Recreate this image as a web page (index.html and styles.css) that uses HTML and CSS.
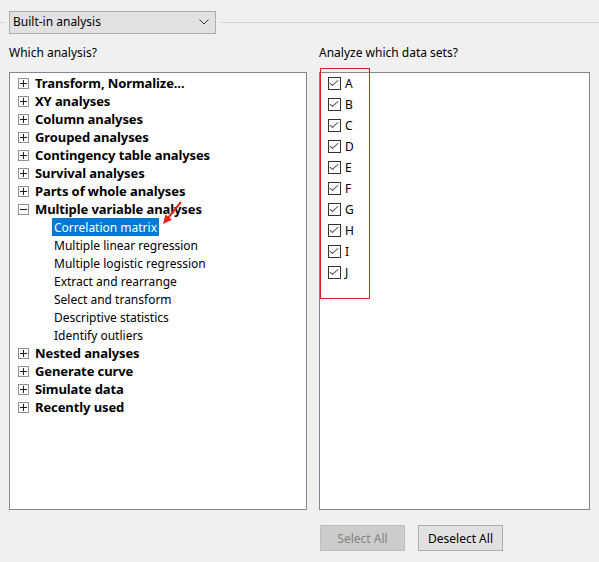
FILE: index.html
```html
<!DOCTYPE html>
<html>
<head>
<meta charset="utf-8">
<link rel="stylesheet" href="styles.css">
</head>
<body>
<div class="header">
  <span class="rule short"></span>
  <div class="dropdown">
    <span>Built-in analysis</span>
    <svg class="chev" width="10" height="6" viewBox="0 0 10 6"><path d="M0.5 0.5 L5 5 L9.5 0.5" fill="none" stroke="#333" stroke-width="1"/></svg>
  </div>
  <span class="rule long"></span>
</div>
<div class="columns">
  <div class="col left">
    <div class="label">Which analysis?</div>
    <div class="box tree">
      <div class="node"><span class="pm plus"></span><b>Transform, Normalize...</b></div>
      <div class="node"><span class="pm plus"></span><b>XY analyses</b></div>
      <div class="node"><span class="pm plus"></span><b>Column analyses</b></div>
      <div class="node"><span class="pm plus"></span><b>Grouped analyses</b></div>
      <div class="node"><span class="pm plus"></span><b>Contingency table analyses</b></div>
      <div class="node"><span class="pm plus"></span><b>Survival analyses</b></div>
      <div class="node"><span class="pm plus"></span><b>Parts of whole analyses</b></div>
      <div class="node"><span class="pm minus"></span><b>Multiple variable analyses</b></div>
      <div class="leaf"><span class="sel">Correlation matrix</span></div>
      <div class="leaf"><span>Multiple linear regression</span></div>
      <div class="leaf"><span>Multiple logistic regression</span></div>
      <div class="leaf"><span>Extract and rearrange</span></div>
      <div class="leaf"><span>Select and transform</span></div>
      <div class="leaf"><span>Descriptive statistics</span></div>
      <div class="leaf"><span>Identify outliers</span></div>
      <div class="node"><span class="pm plus"></span><b>Nested analyses</b></div>
      <div class="node"><span class="pm plus"></span><b>Generate curve</b></div>
      <div class="node"><span class="pm plus"></span><b>Simulate data</b></div>
      <div class="node"><span class="pm plus"></span><b>Recently used</b></div>
      <svg class="arrow" width="24" height="26" viewBox="0 0 24 26">
        <line x1="20" y1="2" x2="7" y2="18" stroke="#e8231b" stroke-width="2"/>
        <polygon points="2,24 4.4,14.4 11,19.8" fill="#e8231b"/>
      </svg>
    </div>
  </div>
  <div class="col right">
    <div class="label">Analyze which data sets?</div>
    <div class="box checks">
      <div class="chk"><span class="cb"></span>A</div>
      <div class="chk"><span class="cb"></span>B</div>
      <div class="chk"><span class="cb"></span>C</div>
      <div class="chk"><span class="cb"></span>D</div>
      <div class="chk"><span class="cb"></span>E</div>
      <div class="chk"><span class="cb"></span>F</div>
      <div class="chk"><span class="cb"></span>G</div>
      <div class="chk"><span class="cb"></span>H</div>
      <div class="chk"><span class="cb"></span>I</div>
      <div class="chk"><span class="cb"></span>J</div>
      <div class="redbox"></div>
    </div>
    <div class="buttons">
      <button class="btn disabled">Select All</button>
      <button class="btn">Deselect All</button>
    </div>
  </div>
</div>
</body>
</html>
```
FILE: styles.css
```css
html, body {
  margin: 0;
  padding: 0;
  background: #f0f0f0;
  font-family: "Noto Sans", "Open Sans", sans-serif;
  font-size: 12px;
  color: #000;
  width: 599px;
  height: 562px;
  overflow: hidden;
}
.header {
  display: flex;
  align-items: center;
  height: 24px;
  margin-top: 10px;
}
.rule {
  height: 1px;
  background: #d5d5d5;
}
.rule.short { width: 5px; margin-right: 4px; }
.rule.long { flex: 1; margin-left: 4px; }
.dropdown {
  box-sizing: border-box;
  width: 207px;
  height: 23px;
  background: #e1e1e1;
  border: 1px solid #adadad;
  display: flex;
  align-items: center;
  justify-content: space-between;
  padding: 0 6px 0 3px;
  line-height: 16px;
}
.columns {
  display: flex;
  gap: 12px;
  padding-left: 9px;
  margin-top: 11px;
}
.col { display: flex; flex-direction: column; }
.left { width: 298px; }
.right { width: 271px; }
.label {
  height: 16px;
  line-height: 16px;
  margin-bottom: 11px;
}
.box {
  box-sizing: border-box;
  height: 438px;
  background: #fff;
  border: 1px solid #828790;
  position: relative;
}
.tree { padding-top: 1px; }
.node, .leaf {
  height: 18px;
  display: flex;
  align-items: center;
  white-space: nowrap;
}
.node b { font-weight: 700; font-size: 13px; letter-spacing: -0.1px; }
.pm {
  box-sizing: border-box;
  width: 11px;
  height: 11px;
  border: 1px solid #919191;
  margin-left: 8px;
  margin-right: 6px;
  position: relative;
  background: #fff;
}
.pm::before {
  content: "";
  position: absolute;
  left: 1px; right: 1px; top: 4px;
  height: 1px;
  background: #1e1e1e;
}
.plus::after {
  content: "";
  position: absolute;
  top: 1px; bottom: 1px; left: 4px;
  width: 1px;
  background: #1e1e1e;
}
.leaf { align-items: stretch; }
.leaf span {
  margin-left: 42px;
  padding: 1px 2px 0;
  line-height: 17px;
}
.leaf .sel {
  background: #0078d7;
  color: #fff;
}
.arrow {
  position: absolute;
  left: 151px;
  top: 127px;
}
.chk {
  height: 21px;
  display: flex;
  align-items: center;
}
.cb {
  box-sizing: border-box;
  width: 13px;
  height: 13px;
  border: 1px solid #333;
  margin-left: 8px;
  margin-right: 4px;
  position: relative;
  background: #fff;
}
.cb::after {
  content: "";
  position: absolute;
  left: 3px;
  top: 0px;
  width: 3px;
  height: 7px;
  border-right: 1px solid #555;
  border-bottom: 1px solid #555;
  transform: rotate(40deg) skewX(-8deg);
}
.redbox {
  position: absolute;
  left: 0px;
  top: -5px;
  width: 48px;
  height: 229px;
  border: 1px solid #e81c1c;
}
.buttons {
  display: flex;
  gap: 13px;
  margin-top: 15px;
  padding-left: 1px;
}
.btn {
  box-sizing: border-box;
  width: 85px;
  height: 26px;
  font-family: inherit;
  font-size: 12px;
  background: #e1e1e1;
  border: 1px solid #adadad;
  color: #000;
  padding: 0;
}
.btn.disabled {
  background: #cccccc;
  border-color: #bfbfbf;
  color: #838383;
}
```
